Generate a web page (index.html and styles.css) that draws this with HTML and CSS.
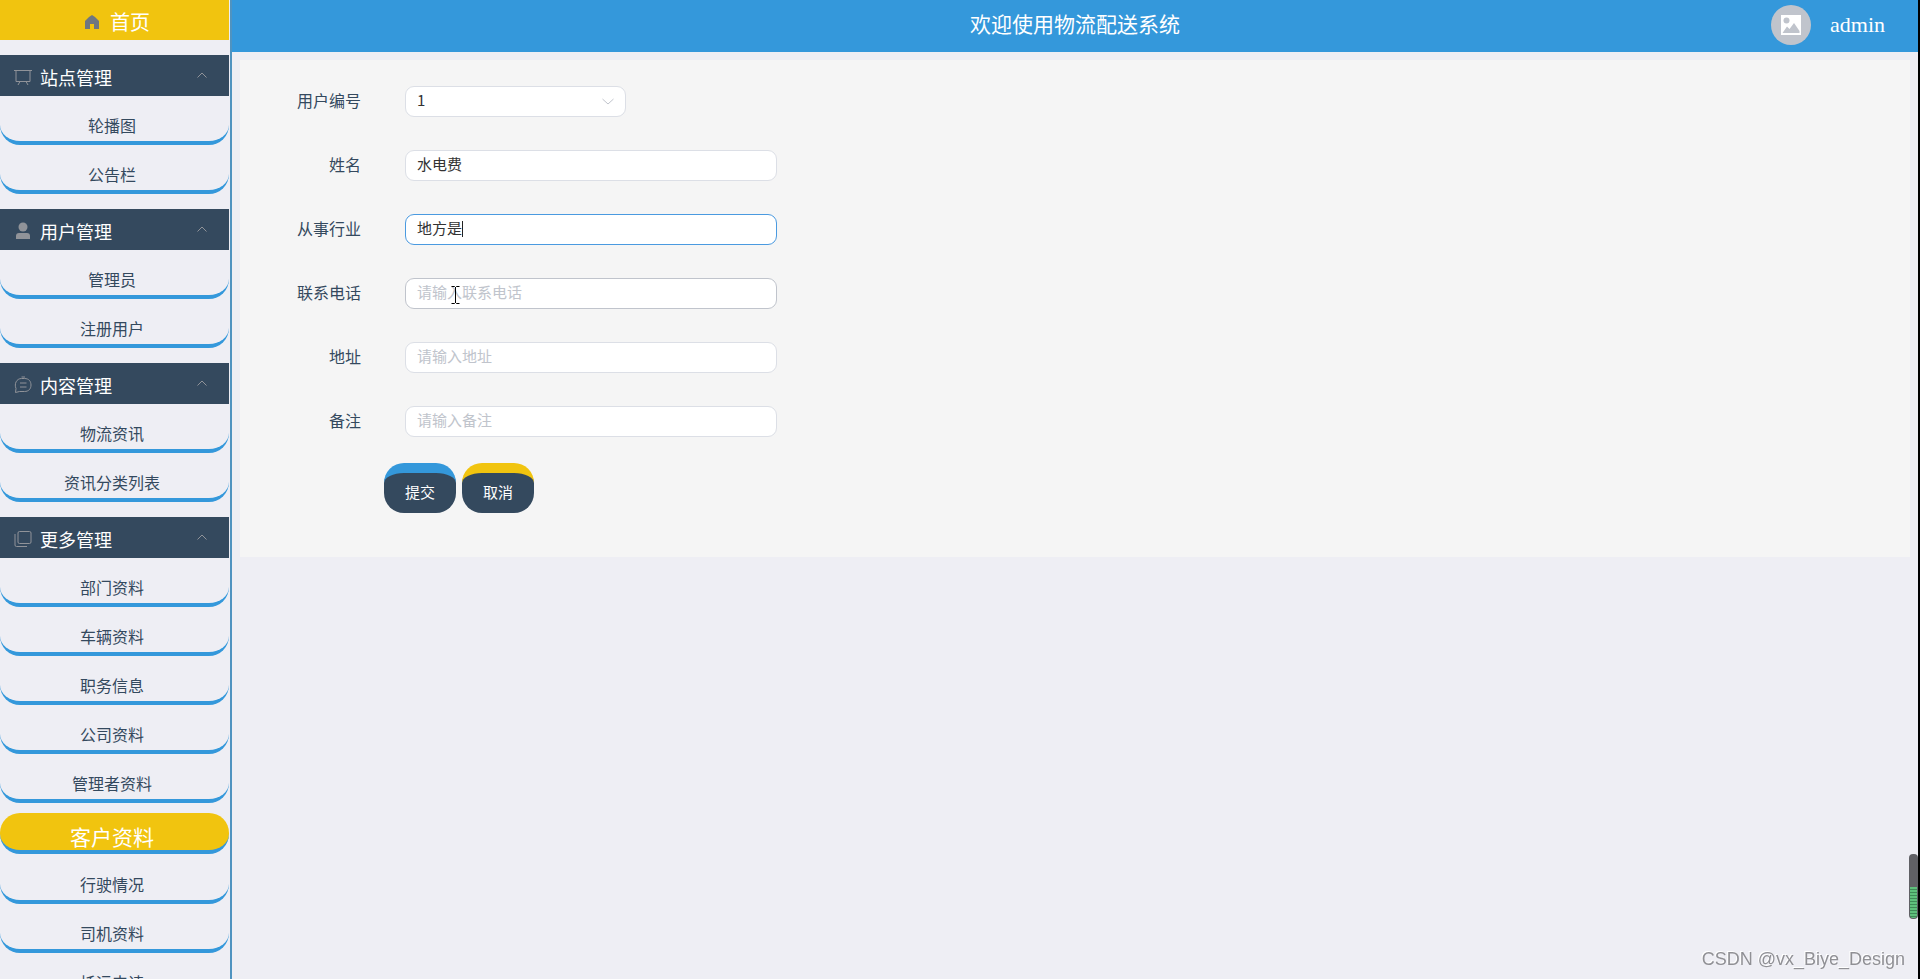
FILE: index.html
```
<!DOCTYPE html>
<html lang="zh-CN">
<head>
  <meta charset="UTF-8">
  <meta name="viewport" content="width=device-width, initial-scale=1.0">
  <title>物流配送系统</title>
  <link rel="stylesheet" href="styles.css">
</head>
<body>
  <div class="layout">
    <!-- Sidebar -->
    <nav class="sidebar">
      <a class="home" href="#">
        <svg class="home-icon" viewBox="0 0 14 14"><path d="M7 0 L10 2 L14 6 V14 H9 V9 H5 V14 H0 V6 L4 2 Z"/></svg>
        <span>首页</span>
      </a>

      <div class="menu-group">
        <button type="button" class="menu-title">
          <svg class="menu-icon" viewBox="0 0 18 18"><path d="M0 2.5H18M2 2.5V13.5H16V2.5M6 13.5L4 17M12 13.5L14 17"/></svg>
          <span>站点管理</span>
          <svg class="arrow" viewBox="0 0 10 6"><path d="M0.5 5.5L5 1L9.5 5.5"/></svg>
        </button>
        <a class="menu-item" href="#">轮播图</a>
        <a class="menu-item" href="#">公告栏</a>
      </div>

      <div class="menu-group">
        <button type="button" class="menu-title">
          <svg class="menu-icon solid" viewBox="0 0 18 18"><circle cx="9" cy="5" r="4.5"/><path d="M2 17V14Q2 11 5 11H13Q16 11 16 14V17Z"/></svg>
          <span>用户管理</span>
          <svg class="arrow" viewBox="0 0 10 6"><path d="M0.5 5.5L5 1L9.5 5.5"/></svg>
        </button>
        <a class="menu-item" href="#">管理员</a>
        <a class="menu-item" href="#">注册用户</a>
      </div>

      <div class="menu-group">
        <button type="button" class="menu-title">
          <svg class="menu-icon" viewBox="0 0 18 18"><path d="M1.5 16.5L2 12.5C0 8 2.5 2.5 7.500 2.500H10.500C15 2.500 17 5.500 17 9C17 13 14.500 15.500 10.500 15.500H5.500ZM7.500 1H11M6 7H12.500M6 11H12.500"/></svg>
          <span>内容管理</span>
          <svg class="arrow" viewBox="0 0 10 6"><path d="M0.5 5.5L5 1L9.5 5.5"/></svg>
        </button>
        <a class="menu-item" href="#">物流资讯</a>
        <a class="menu-item" href="#">资讯分类列表</a>
      </div>

      <div class="menu-group">
        <button type="button" class="menu-title">
          <svg class="menu-icon" viewBox="0 0 18 18"><rect x="4" y="1.5" width="13" height="12" rx="1.5"/><path d="M1 4V15Q1 16.5 2.5 16.5H13"/></svg>
          <span>更多管理</span>
          <svg class="arrow" viewBox="0 0 10 6"><path d="M0.5 5.5L5 1L9.5 5.5"/></svg>
        </button>
        <a class="menu-item" href="#">部门资料</a>
        <a class="menu-item" href="#">车辆资料</a>
        <a class="menu-item" href="#">职务信息</a>
        <a class="menu-item" href="#">公司资料</a>
        <a class="menu-item" href="#">管理者资料</a>
        <a class="menu-item active" href="#">客户资料</a>
        <a class="menu-item" href="#">行驶情况</a>
        <a class="menu-item" href="#">司机资料</a>
        <a class="menu-item" href="#">托运申请</a>
      </div>
    </nav>

    <!-- Right side -->
    <div class="page">
      <header class="topbar">
        <h1>欢迎使用物流配送系统</h1>
        <div class="user">
          <svg class="avatar" viewBox="0 0 40 40">
            <circle cx="20" cy="20" r="20" fill="#c0c4cc"/>
            <path d="M10 10H30V30H10Z" fill="#fff"/>
            <circle cx="15.5" cy="15.5" r="3" fill="#c0c4cc"/>
            <path d="M11.5 28L16 21.5L18.5 24L23 18L28.5 26V28Z" fill="#c0c4cc"/>
          </svg>
          <span>admin</span>
        </div>
      </header>

      <main class="panel">
        <form>
          <div class="form-row">
            <label for="userId">用户编号</label>
            <div class="field short">
              <select id="userId" name="userId">
                <option selected>1</option>
                <option>2</option>
              </select>
              <svg class="select-arrow" viewBox="0 0 12 7"><path d="M0.5 1L6 6L11.5 1"/></svg>
            </div>
          </div>
          <div class="form-row">
            <label for="name">姓名</label>
            <div class="field"><input type="text" id="name" name="name" placeholder="请输入姓名" value="水电费"></div>
          </div>
          <div class="form-row">
            <label for="industry">从事行业</label>
            <div class="field">
              <input class="focused" type="text" id="industry" name="industry" placeholder="请输入从事行业" value="地方是">
              <span class="caret"></span>
            </div>
          </div>
          <div class="form-row">
            <label for="phone">联系电话</label>
            <div class="field">
              <input class="hovered" type="tel" id="phone" name="phone" placeholder="请输入联系电话">
              <svg class="pointer" viewBox="0 0 9 18"><path d="M0.5 0.5H3.5L4.5 1.5L5.5 0.5H8.5M4.5 1V17M0.5 17.5H3.5L4.5 16.5L5.5 17.5H8.5"/></svg>
            </div>
          </div>
          <div class="form-row">
            <label for="address">地址</label>
            <div class="field"><input type="text" id="address" name="address" placeholder="请输入地址"></div>
          </div>
          <div class="form-row">
            <label for="remark">备注</label>
            <div class="field"><input type="text" id="remark" name="remark" placeholder="请输入备注"></div>
          </div>
          <div class="actions">
            <button type="button" class="btn submit">提交</button>
            <button type="button" class="btn cancel">取消</button>
          </div>
        </form>
      </main>
    </div>
  </div>

  <div class="meter"><div class="meter-level"></div></div>
  <div class="watermark">CSDN @vx_Biye_Design</div>
</body>
</html>
```
FILE: styles.css
```
/* General Styles */
* {
  box-sizing: border-box;
}

body {
  margin: 0;
  font-family: "Noto Sans CJK SC", sans-serif;
  font-size: 16px;
  color: #34495e;
  background-color: #eeeef4;
}

button, input, select {
  font-family: inherit;
}

a {
  text-decoration: none;
}

.layout {
  display: flex;
  height: 100vh;
  overflow: hidden;
  border-right: 2px solid #000;
}

/* Sidebar */
.sidebar {
  flex: none;
  width: 232px;
  padding-right: 1px;
  overflow: hidden;
  border-right: 2px solid #4f93c0;
}

.home {
  display: flex;
  align-items: center;
  justify-content: center;
  gap: 11px;
  height: 40px;
  padding: 4px 0 0 6px;
  font-size: 20px;
  line-height: 36px;
  color: #fff;
  background-color: #f1c40f;
}

.home-icon {
  width: 14px;
  height: 14px;
  fill: #6f7780;
}

.menu-group {
  margin-top: 15px;
}

.menu-title {
  display: flex;
  align-items: center;
  gap: 8px;
  width: 100%;
  height: 41px;
  padding: 2px 22px 0 14px;
  border: none;
  font-size: 18px;
  color: #fff;
  background-color: #34495e;
  cursor: pointer;
}

.menu-icon {
  width: 18px;
  height: 18px;
  fill: none;
  stroke: #909399;
}

.menu-icon.solid {
  fill: #909399;
  stroke: none;
}

.arrow {
  width: 10px;
  height: 6px;
  margin: 0 0 4px auto;
  fill: none;
  stroke: #909399;
}

.menu-item {
  display: block;
  height: 41px;
  margin-top: 8px;
  padding: 6px 5px 0 0;
  border-bottom: 4px solid #3498db;
  border-radius: 20px;
  line-height: 30px;
  text-align: center;
  color: #34495e;
}

.menu-item.active {
  margin: 10px 0 9px;
  padding-top: 8px;
  font-size: 21px;
  color: #fff;
  background-color: #f1c40f;
}

/* Top bar */
.page {
  flex: 1;
  min-width: 0;
}

.topbar {
  display: grid;
  grid-template-columns: 1fr auto 1fr;
  align-items: center;
  height: 52px;
  padding: 0 33px;
  color: #fff;
  background-color: #3498db;
}

.topbar h1 {
  grid-column: 2;
  margin: 0;
  padding-bottom: 6px;
  font-family: KaiTi, STKaiti, "Noto Sans CJK SC", serif;
  font-size: 21px;
  font-weight: normal;
}

.user {
  display: flex;
  align-items: center;
  justify-content: flex-end;
  gap: 19px;
  padding-bottom: 3px;
  font-family: "Liberation Serif", serif;
  font-size: 22px;
}

.avatar {
  width: 40px;
  height: 40px;
}

/* Form */
.panel {
  margin: 8px;
  padding: 26px 0 44px;
  background-color: #f5f5f5;
}

.form-row {
  display: flex;
  gap: 44px;
  margin-bottom: 33px;
}

.form-row label {
  width: 121px;
  line-height: 28px;
  text-align: right;
}

.field {
  position: relative;
  width: 372px;
}

.field.short {
  width: 221px;
}

.field input, .field select {
  display: block;
  width: 100%;
  height: 31px;
  padding: 0 11px 4px;
  border: 1px solid #dcdfe6;
  border-radius: 9px;
  outline: none;
  font-size: 15px;
  color: #333;
  background-color: #fff;
  appearance: none;
}

.field input::placeholder {
  color: #c0c4cc;
}

.field input.focused {
  border-color: #4a9ae0;
}

.field input.hovered {
  border-color: #c0c4cc;
}

.select-arrow {
  position: absolute;
  top: 12px;
  right: 12px;
  width: 12px;
  height: 7px;
  fill: none;
  stroke: #c0c4cc;
  pointer-events: none;
}

.caret {
  position: absolute;
  top: 7px;
  left: 57px;
  width: 1px;
  height: 16px;
  background-color: #222;
}

.pointer {
  position: absolute;
  top: 8px;
  left: 46px;
  width: 9px;
  height: 18px;
  fill: none;
  stroke: #000;
  pointer-events: none;
}

.actions {
  display: flex;
  gap: 6px;
  margin-top: -7px;
  padding-left: 144px;
}

.btn {
  width: 72px;
  height: 50px;
  padding: 0 0 3px;
  border: none;
  border-top: 10px solid #3498db;
  border-radius: 20px;
  font-size: 15px;
  color: #fff;
  background-color: #34495e;
  cursor: pointer;
}

.btn.cancel {
  border-top-color: #f1c40f;
}

/* Overlays */
.meter {
  position: fixed;
  right: 2px;
  bottom: 60px;
  display: flex;
  align-items: flex-end;
  width: 9px;
  height: 65px;
  padding: 1px;
  border-radius: 4px;
  background-color: #606065;
}

.meter-level {
  width: 100%;
  height: 31px;
  border-radius: 0 0 3px 3px;
  background: repeating-linear-gradient(#5fbf7c 0 2px, #3f8a58 2px 3px);
}

.watermark {
  position: fixed;
  right: 15px;
  bottom: 9px;
  font-family: "Liberation Sans", sans-serif;
  font-size: 18px;
  line-height: 22px;
  color: #909095;
  text-shadow: -1px -1px 0 #fff;
}
```
